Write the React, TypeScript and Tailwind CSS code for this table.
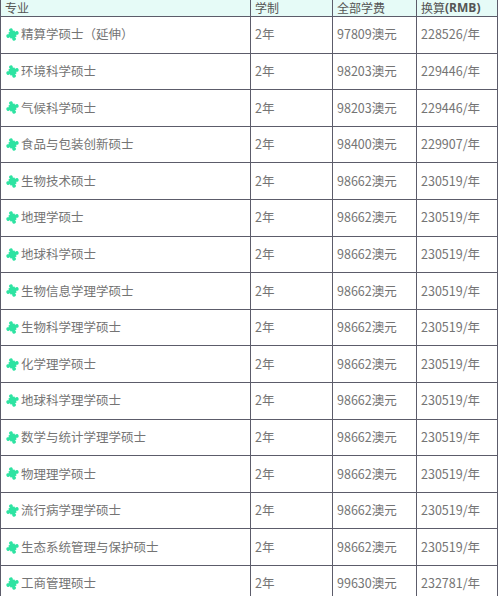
const rows: [string, string, string][] = [
  ['精算学硕士（延伸）', '97809澳元', '228526/年'],
  ['环境科学硕士', '98203澳元', '229446/年'],
  ['气候科学硕士', '98203澳元', '229446/年'],
  ['食品与包装创新硕士', '98400澳元', '229907/年'],
  ['生物技术硕士', '98662澳元', '230519/年'],
  ['地理学硕士', '98662澳元', '230519/年'],
  ['地球科学硕士', '98662澳元', '230519/年'],
  ['生物信息学理学硕士', '98662澳元', '230519/年'],
  ['生物科学理学硕士', '98662澳元', '230519/年'],
  ['化学理学硕士', '98662澳元', '230519/年'],
  ['地球科学理学硕士', '98662澳元', '230519/年'],
  ['数学与统计学理学硕士', '98662澳元', '230519/年'],
  ['物理理学硕士', '98662澳元', '230519/年'],
  ['流行病学理学硕士', '98662澳元', '230519/年'],
  ['生态系统管理与保护硕士', '98662澳元', '230519/年'],
  ['工商管理硕士', '99630澳元', '232781/年'],
];

// puzzle piece: square body with four knobs
function Puzzle() {
  return (
    <svg width="13" height="13" viewBox="0 0 12 12" className="shrink-0">
      <g fill="#2ee3a2" transform="rotate(-20 6 6)">
        <rect x="3" y="3" width="6" height="6" rx="0.5" />
        <rect x="4.9" y="1.5" width="2.2" height="9" />
        <rect x="1.5" y="4.9" width="9" height="2.2" />
        <circle cx="6" cy="1.8" r="1.7" />
        <circle cx="10.2" cy="6" r="1.7" />
        <circle cx="6" cy="10.2" r="1.7" />
        <circle cx="1.8" cy="6" r="1.7" />
      </g>
    </svg>
  );
}

export default function App() {
  return (
    <div
      className="w-[500px] h-[596px] overflow-hidden bg-white text-[12.5px] text-[#747474]"
      style={{ fontFamily: '"Noto Sans CJK SC", "Noto Sans", sans-serif' }}
    >
      <div className="w-[498px] border-l border-[#5c5c6a]">
        <div className="grid grid-cols-[250px_82px_84px_81px] h-[17px] bg-[#e6fbf7] border-b border-[#5c5c6a] text-[#555] text-[12px]">
          <div className="flex items-center pl-[4px] leading-[14px] border-r border-[#5c5c6a]">专业</div>
          <div className="flex items-center pl-[4px] leading-[14px] border-r border-[#5c5c6a]">学制</div>
          <div className="flex items-center pl-[4px] leading-[14px] border-r border-[#5c5c6a]">全部学费</div>
          <div className="flex items-center pl-[4px] leading-[14px] border-r border-[#5c5c6a]">
            换算<span className="font-bold" style={{ fontFamily: '"Open Sans", sans-serif' }}>(RMB)</span>
          </div>
        </div>
        {rows.map(([name, fee, rmb]) => (
          <div
            key={name}
            className="grid grid-cols-[250px_82px_84px_81px] h-[36.6px] border-b border-[#5c5c6a]"
          >
            <div className="flex items-center gap-[2px] pl-[5px] border-r border-[#5c5c6a]">
              <Puzzle />
              <span>{name}</span>
            </div>
            <div className="flex items-center pl-[4px] border-r border-[#5c5c6a]">2年</div>
            <div className="flex items-center pl-[4px] border-r border-[#5c5c6a]">{fee}</div>
            <div className="flex items-center pl-[4px] border-r border-[#5c5c6a]">{rmb}</div>
          </div>
        ))}
      </div>
    </div>
  );
}
